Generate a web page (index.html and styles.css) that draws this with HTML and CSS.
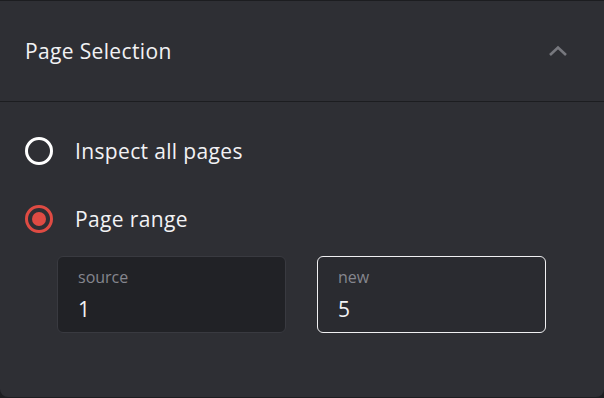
FILE: index.html
```html
<!DOCTYPE html>
<html lang="en">
<head>
    <meta charset="UTF-8">
    <meta name="viewport" content="width=device-width, initial-scale=1.0">
    <title>Page Selection</title>
    <link rel="stylesheet" href="styles.css">
</head>
<body>
    <div class="panel">
        <div class="panel-header">
            <span class="panel-title">Page Selection</span>
            <svg class="chevron" width="20" height="12" viewBox="0 0 20 12">
                <path d="M2 10 L10 2.5 L18 10" fill="none" stroke="#77787e" stroke-width="2.6"/>
            </svg>
        </div>
        <div class="panel-body">
            <label class="option">
                <span class="radio"></span>
                <span class="option-text">Inspect all pages</span>
            </label>
            <label class="option">
                <span class="radio checked"></span>
                <span class="option-text">Page range</span>
            </label>
            <div class="range">
                <div class="field">
                    <span class="field-label">source</span>
                    <span class="field-value">1</span>
                </div>
                <div class="field active">
                    <span class="field-label">new</span>
                    <span class="field-value">5</span>
                </div>
            </div>
        </div>
    </div>
</body>
</html>
```

FILE: styles.css
```css
body {
    margin: 0;
    background: #1d1e21;
    font-family: "Open Sans", "Noto Sans", sans-serif;
    color: #f2f2f4;
}
.panel {
    height: 397px;
    box-sizing: border-box;
    background: #2e2f34;
    border-top: 1px solid #1c1d20;
    border-radius: 0 0 8px 8px;
}
.panel-header {
    height: 100px;
    display: flex;
    align-items: center;
    justify-content: space-between;
    padding: 0 36px 0 25px;
    border-bottom: 1px solid #1c1d20;
}
.panel-title {
    font-size: 21px;
    letter-spacing: 0.35px;
}
.chevron {
    display: block;
}
.panel-body {
    padding: 27px 25px 0;
}
.option {
    display: flex;
    align-items: center;
    gap: 22px;
    height: 44px;
    margin-bottom: 24px;
}
.option-text {
    font-size: 21px;
    letter-spacing: 0.35px;
}
.radio {
    width: 28px;
    height: 28px;
    box-sizing: border-box;
    border: 3px solid #ffffff;
    border-radius: 50%;
    display: flex;
    align-items: center;
    justify-content: center;
}
.radio.checked {
    border-color: #df4b43;
}
.radio.checked::after {
    content: "";
    width: 14px;
    height: 14px;
    border-radius: 50%;
    background: #df4b43;
}
.range {
    display: flex;
    gap: 31px;
    margin: -9px 0 0 32px;
}
.field {
    width: 229px;
    height: 77px;
    box-sizing: border-box;
    border: 1px solid #393a40;
    border-radius: 6px;
    background: #212226;
    padding: 9px 20px 0;
    display: flex;
    flex-direction: column;
}
.field.active {
    border-color: #f0f0f2;
    background: #2a2b30;
}
.field-label {
    font-size: 16px;
    color: #85868e;
    line-height: 22px;
}
.field-value {
    font-size: 21px;
    line-height: 28px;
    margin-top: 7px;
}
```
